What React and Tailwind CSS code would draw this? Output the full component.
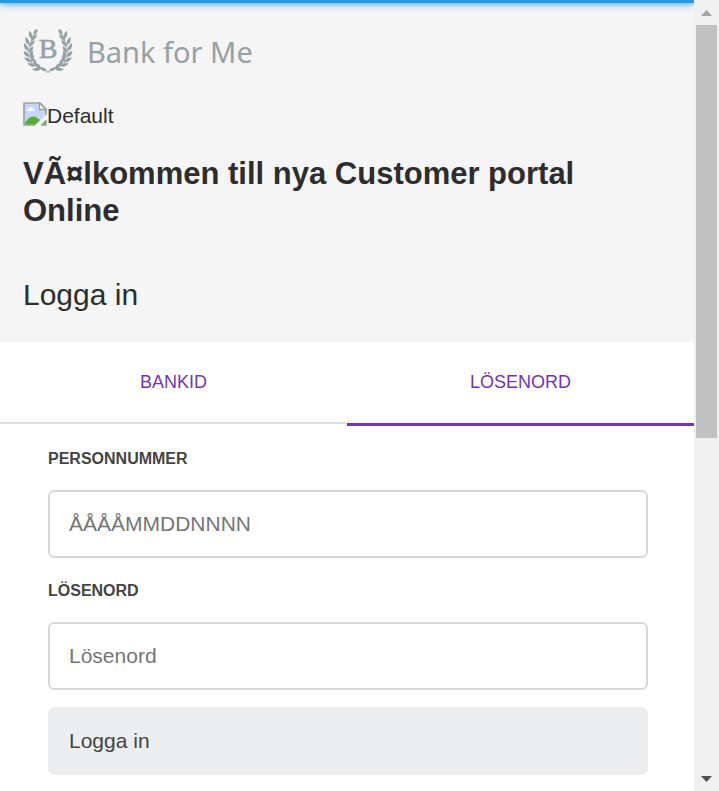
import React from "react";

// One half of the laurel wreath: base x, base y, direction in degrees, length.
const leaves = [
  [11, 6, -62, 7],
  [9, 10, -108, 9],
  [8, 12, -48, 9],
  [6, 16, -112, 9],
  [6, 18, -50, 9],
  [5, 22, -116, 9],
  [6, 24, -58, 8],
  [6, 28, -132, 8],
  [7, 29, -70, 8],
  [9, 33, -150, 9],
  [9, 33, -82, 8],
  [13, 37, -164, 9],
  [13, 37, -106, 8],
  [18, 40, 178, 9],
  [18, 40, -132, 8],
  [24, 42, -152, 8],
];

function Laurel() {
  return (
    <g>
      <path d="M27 44C22 40 14 40 8 33C3 26 5 15 12 4" fill="none" stroke="#95a1a5" strokeWidth="0.7" />
      {leaves.map(([x, y, a, l], i) => (
        <path
          key={i}
          fill="#95a1a5"
          transform={`translate(${x} ${y}) rotate(${a})`}
          d={`M0 0Q${l * 0.45} -3.6 ${l} 0Q${l * 0.45} 3 0 0Z`}
        />
      ))}
    </g>
  );
}

function Logo() {
  return (
    <div className="flex items-center gap-3.5 text-[#95a1a5]">
      <svg width="50" height="45" viewBox="0 0 50 45" aria-hidden="true">
        <Laurel />
        <g transform="translate(50 0) scale(-1 1)">
          <Laurel />
        </g>
        <text
          x="25"
          y="29"
          textAnchor="middle"
          fontSize="28"
          fill="#95a1a5"
          stroke="#95a1a5"
          strokeWidth="0.6"
          className="font-['Liberation_Serif',serif]"
        >
          B
        </text>
      </svg>
      <span className="font-['Noto_Sans',sans-serif] text-[29px] leading-[45px]">Bank for Me</span>
    </div>
  );
}

function BrokenImage() {
  return (
    <svg width="24" height="24" viewBox="0 0 24 24" className="shrink-0" aria-hidden="true">
      <path d="M1 1H17L23 7V23H1Z" fill="#c5d7f6" />
      <path d="M4 9C4 7 6 7 6.500 6C8 4 10 5 10 7C12 7 12 9 11 9Z" fill="#fff" />
      <path d="M1 23C4 16 9 13 13 15L17 18L12 23Z" fill="#55ad32" />
      <path d="M12 23H1V1H17L23 7V13" fill="none" stroke="#a0a0a0" strokeWidth="1.700" />
      <path d="M16.500 1V7.500H23Z" fill="#fff" stroke="#a0a0a0" strokeWidth="1.300" />
      <path d="M12 24L24 12V17L17 24Z" fill="#f5f5f5" />
      <path d="M18 23H23V18Z" fill="#55ad32" />
      <path d="M18 23H23V18" fill="none" stroke="#a0a0a0" strokeWidth="1.500" />
    </svg>
  );
}

function Field({ id, label, type, placeholder }) {
  return (
    <div>
      <label htmlFor={id} className="block text-[16px] leading-5 font-bold text-[#444]">
        {label}
      </label>
      <input
        id={id}
        type={type}
        placeholder={placeholder}
        className="mt-[21px] block h-[68px] w-full rounded-md border-2 border-[#d9d9d9] bg-white px-[19px] text-[21px] text-[#333] outline-none placeholder:text-[#757575]"
      />
    </div>
  );
}

function ScrollBar() {
  return (
    <div className="flex w-[25px] shrink-0 flex-col items-center bg-[#f0f0f0]" aria-hidden="true">
      <div className="flex h-[25px] items-center">
        <svg width="11" height="6" viewBox="0 0 11 6">
          <path d="M0 6L5.500 0L11 6Z" fill="#a3a3a3" />
        </svg>
      </div>
      <div className="flex w-full flex-1 flex-col px-0.5">
        <div className="h-[413px] bg-[#c1c1c1]" />
      </div>
      <div className="flex h-[25px] items-center">
        <svg width="11" height="6" viewBox="0 0 11 6">
          <path d="M0 0L5.500 6L11 0Z" fill="#505050" />
        </svg>
      </div>
    </div>
  );
}

export default function App() {
  return (
    <div className="flex h-screen overflow-hidden bg-white font-['Liberation_Sans',Arial,sans-serif] text-[#2d2d2d]">
      <main className="min-w-0 flex-1 overflow-hidden">
        <header className="bg-[#f5f5f5]">
          <div className="h-[3px] bg-[#2699e0] shadow-[0_0_10px_#2699e0,0_0_5px_#2699e0]" />
          <div className="px-[23px] pt-[26px] pb-[29px]">
            <Logo />
            <div className="mt-7 flex h-6 items-center text-[21px]">
              <BrokenImage />
              <span className="pt-1 leading-6">Default</span>
            </div>
            <h1 className="mt-[29px] text-[31px] leading-[37px] font-bold">VÃ¤lkommen till nya Customer portal Online</h1>
            <h2 className="mt-12 text-[30px] leading-9">Logga in</h2>
          </div>
        </header>
        <div role="tablist" className="flex h-[84px] items-start text-[18px] text-[#7035b8]">
          <button role="tab" aria-selected="false" className="h-[82px] flex-1 border-b-2 border-[#dcdcdc]">
            BANKID
          </button>
          <button role="tab" aria-selected="true" className="h-[84px] flex-1 border-b-3 border-[#7035b8]">
            LÖSENORD
          </button>
        </div>
        <form className="flex flex-col gap-[23px] pt-[23px] pr-[46px] pl-12" onSubmit={(e) => e.preventDefault()}>
          <Field id="personnummer" label="PERSONNUMMER" type="text" placeholder="ÅÅÅÅMMDDNNNN" />
          <Field id="losenord" label="LÖSENORD" type="password" placeholder="Lösenord" />
          <button type="submit" className="-mt-1.5 h-[68px] rounded-md bg-[#ebedef] px-[21px] text-left text-[21px] text-[#444]">
            Logga in
          </button>
        </form>
      </main>
      <ScrollBar />
    </div>
  );
}
